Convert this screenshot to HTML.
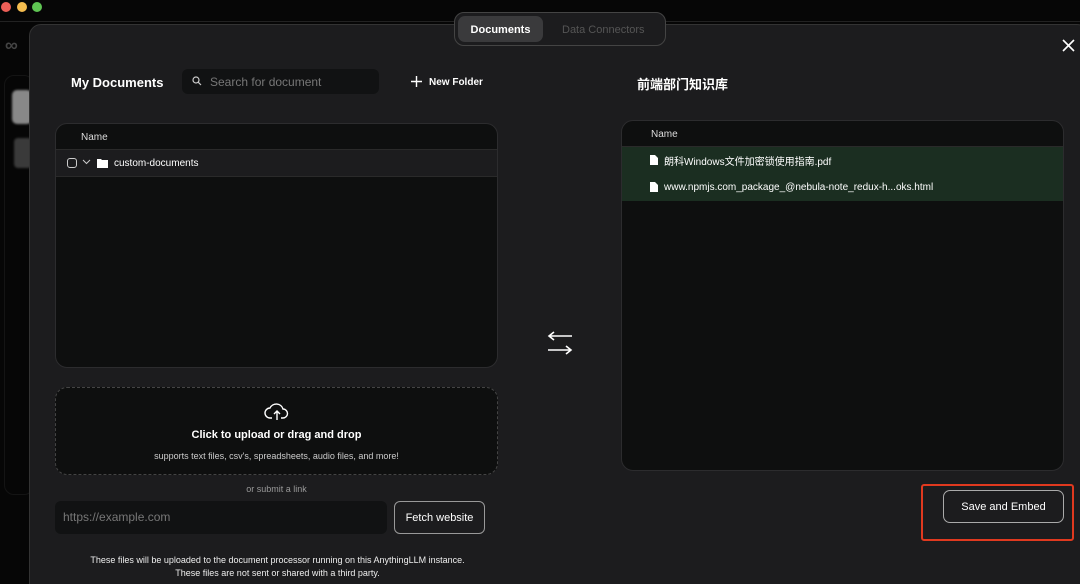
<!DOCTYPE html>
<html><head><meta charset="utf-8"><style>
*{box-sizing:border-box;margin:0;padding:0}
html,body{width:1080px;height:584px;overflow:hidden}
body{background:#060606;font-family:"Liberation Sans","Noto Sans CJK SC",sans-serif;color:#fff;position:relative}
.dot{position:absolute;top:2px;width:10px;height:10px;border-radius:50%}
.abs{position:absolute}
.modal{position:absolute;left:29px;top:24px;width:1060px;height:580px;background:#1c1c1e;border:1px solid #333;border-radius:12px}
.panel{position:absolute;background:#0e0f0f;border:1px solid #2c2c2e;border-radius:12px;overflow:hidden}
.hdr{height:26px;border-bottom:1px solid #2a2a2a;font-size:10px;color:#ddd;line-height:26px}
</style></head><body>
<div class="dot" style="left:1px;background:#ed5f57"></div>
<div class="dot" style="left:17px;background:#f5bd4f"></div>
<div class="dot" style="left:32px;background:#5fc553"></div>
<div class="abs" style="left:0;top:21px;width:1080px;height:1px;background:#222"></div>
<div class="abs" style="left:5px;top:35px;color:#444;font-size:18px;font-weight:bold">∞</div>
<div class="abs" style="left:4px;top:75px;width:30px;height:420px;border:1px solid #141414;border-radius:10px"></div>
<div class="abs" style="left:12px;top:90px;width:20px;height:34px;background:#888;border-radius:5px;filter:blur(1px)"></div>
<div class="abs" style="left:14px;top:138px;width:18px;height:30px;background:#3a3a3a;border-radius:4px;filter:blur(1px)"></div>
<div class="modal"></div>
<div class="abs" style="left:454px;top:12px;width:212px;height:34px;border:1px solid #444;border-radius:10px;background:#1c1c1e"></div>
<div class="abs" style="left:458px;top:16px;width:85px;height:26px;background:#3a3a3c;border-radius:7px;font-size:11px;font-weight:bold;text-align:center;line-height:28px">Documents</div>
<div class="abs" style="left:562px;top:24px;font-size:11px;color:#555">Data Connectors</div>
<svg class="abs" style="left:1062px;top:39px" width="13" height="13" viewBox="0 0 13 13"><path d="M1 1L12 12M12 1L1 12" stroke="#fff" stroke-width="1.6"/></svg>
<div class="abs" style="left:71px;top:75px;font-size:13px;font-weight:bold">My Documents</div>
<div class="abs" style="left:182px;top:69px;width:197px;height:25px;background:#111213;border-radius:6px"></div>
<svg class="abs" style="left:192px;top:76px" width="10" height="10" viewBox="0 0 10 10"><circle cx="4" cy="4" r="3" stroke="#ccc" fill="none" stroke-width="1.2"/><path d="M6.3 6.3L9 9" stroke="#ccc" stroke-width="1.2"/></svg>
<div class="abs" style="left:210px;top:75px;font-size:12px;color:#777">Search for document</div>
<svg class="abs" style="left:410px;top:75px" width="13" height="13"><path d="M6.5 1V12M1 6.5H12" stroke="#fff" stroke-width="1.4"/></svg>
<div class="abs" style="left:429px;top:77px;font-size:10px;font-weight:bold">New Folder</div>
<div class="panel" style="left:55px;top:123px;width:443px;height:245px">
 <div class="hdr" style="padding-left:25px;line-height:28px">Name</div>
 <div style="height:27px;background:#1c1c1e;border-bottom:1px solid #2a2a2a;position:relative;font-size:10px;line-height:27px">
  <div class="abs" style="left:11px;top:8px;width:10px;height:10px;border:1px solid #ccc;border-radius:3px"></div>
  <svg class="abs" style="left:26px;top:9px" width="9" height="6"><path d="M1 1L4.5 4.5L8 1" stroke="#ccc" fill="none"/></svg>
  <svg class="abs" style="left:41px;top:8px" width="11" height="10"><path d="M0 1h4l1 1h6v8H0z" fill="#fff"/></svg>
  <span style="position:absolute;left:58px">custom-documents</span>
 </div>
</div>
<div class="abs" style="left:55px;top:387px;width:443px;height:88px;border:1.5px dashed #444;border-radius:12px;background:#0e0f0f"></div>
<svg class="abs" style="left:264px;top:401px" width="26" height="20" viewBox="0 0 26 20"><path d="M8 17H6a5 5 0 0 1 0-10a7 7 0 0 1 13 1a4.5 4.5 0 0 1 0 9h-2" stroke="#fff" fill="none" stroke-width="1.4"/><path d="M13 19V10M10 13l3-3l3 3" stroke="#fff" fill="none" stroke-width="1.4"/></svg>
<div class="abs" style="left:55px;top:429px;width:443px;text-align:center;font-size:11px;font-weight:bold">Click to upload or drag and drop</div>
<div class="abs" style="left:55px;top:451px;width:443px;text-align:center;font-size:9px;color:#ccc">supports text files, csv's, spreadsheets, audio files, and more!</div>
<div class="abs" style="left:55px;top:484px;width:443px;text-align:center;font-size:9px;color:#999">or submit a link</div>
<div class="abs" style="left:55px;top:501px;width:332px;height:33px;background:#111213;border-radius:6px;font-size:12px;color:#777;line-height:33px;padding-left:8px">https://example.com</div>
<div class="abs" style="left:394px;top:501px;width:91px;height:33px;border:1px solid #999;border-radius:6px;font-size:11px;line-height:33px;text-align:center">Fetch website</div>
<div class="abs" style="left:40px;top:554px;width:475px;text-align:center;font-size:9px;line-height:13px;color:#eee">These files will be uploaded to the document processor running on this AnythingLLM instance.<br>These files are not sent or shared with a third party.</div>
<svg class="abs" style="left:546px;top:331px" width="28" height="24" viewBox="0 0 28 24"><path d="M26 5H3M8 1L3 5L8 9M2 19H25M20 15L25 19L20 23" stroke="#fff" fill="none" stroke-width="1.6"/></svg>
<div class="abs" style="left:637px;top:74px;font-size:13px;font-weight:bold">前端部门知识库</div>
<div class="panel" style="left:621px;top:120px;width:443px;height:351px">
 <div class="hdr" style="padding-left:29px;height:26px;line-height:27px">Name</div>
 <div style="background:#1b2e21;height:54px;font-size:10px;position:relative">
  <svg class="abs" style="left:28px;top:8px" width="8" height="10"><path d="M0 0h5l3 3v7H0z" fill="#fff"/></svg>
  <span class="abs" style="left:42px;top:6px">朗科Windows文件加密锁使用指南.pdf</span>
  <svg class="abs" style="left:28px;top:35px" width="8" height="10"><path d="M0 0h5l3 3v7H0z" fill="#fff"/></svg>
  <span class="abs" style="left:42px;top:35px">www.npmjs.com_package_@nebula-note_redux-h...oks.html</span>
 </div>
</div>
<div class="abs" style="left:921px;top:484px;width:153px;height:57px;border:2px solid #e0391f;border-radius:3px"></div>
<div class="abs" style="left:943px;top:490px;width:121px;height:33px;border:1px solid #aaa;border-radius:7px;font-size:11px;line-height:33px;text-align:center">Save and Embed</div>
</body></html>
